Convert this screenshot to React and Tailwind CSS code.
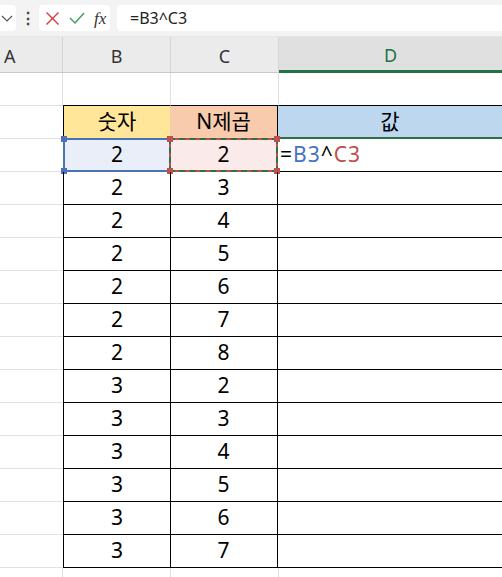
import React from 'react';

const rows = [
  [2, 2], [2, 3], [2, 4], [2, 5], [2, 6], [2, 7], [2, 8],
  [3, 2], [3, 3], [3, 4], [3, 5], [3, 6], [3, 7],
];

const font = { fontFamily: '"Noto Sans", "Noto Sans CJK KR", sans-serif' };

const Handle = ({ className }) => (
  <div className={`absolute w-[6px] h-[6px] ${className}`} />
);

const App = () => {
  return (
    <div className="w-[502px] h-[577px] overflow-hidden bg-white" style={font}>
      {/* Formula bar */}
      <div className="h-[37px] bg-[#f3f3f3] flex items-start pt-[5px] border-b border-[#e6e6e6]">
        <div className="w-[16px] h-[26px] bg-white rounded-r-[4px] flex items-center justify-center shrink-0">
          <svg width="12" height="10" viewBox="0 0 12 10" className="ml-[-3px]">
            <path d="M1 3 L6 8 L11 3" fill="none" stroke="#555" strokeWidth="1.2" />
          </svg>
        </div>
        <div className="w-[23px] h-[26px] flex items-center justify-center text-[#444] text-[16px] font-bold shrink-0">⋮</div>
        <div className="w-[71px] h-[26px] bg-white rounded-[4px] flex items-center pl-[6px] gap-[9px] shrink-0">
          <svg width="15" height="15" viewBox="0 0 15 15">
            <path d="M1.5 1.5 L13.5 13.5 M13.5 1.5 L1.5 13.5" stroke="#d9363e" strokeWidth="1.4" />
          </svg>
          <svg width="16" height="14" viewBox="0 0 16 14">
            <path d="M1 7 L6 12 L15 2" fill="none" stroke="#3d9b5b" strokeWidth="1.4" />
          </svg>
          <span className="text-[17px] italic text-[#333] leading-none" style={{ fontFamily: '"Liberation Serif", serif' }}>fx</span>
        </div>
        <div className="ml-[7px] flex-1 h-[26px] bg-white rounded-l-[4px] flex items-center pl-[13px] text-[16px] text-[#222]">
          =B3^C3
        </div>
      </div>

      {/* Column headers */}
      <div className="h-[36px] flex bg-[#ebebeb] border-b border-[#c8c8c8] text-[18px] text-[#333]">
        <div className="w-[63px] border-r border-[#d6d6d6] flex items-center pl-[4px] pt-[3px]">A</div>
        <div className="w-[108px] border-r border-[#d6d6d6] flex items-center justify-center pt-[3px]">B</div>
        <div className="w-[108px] border-r border-[#d6d6d6] flex items-center justify-center pt-[3px]">C</div>
        <div className="flex-1 bg-[#e0e0e0] border-b-[3px] border-[#217346] flex items-center justify-center text-[#217346] mb-[-1px] pt-[3px]">D</div>
      </div>

      {/* Row 1 (empty) */}
      <div className="h-[33px] flex">
        <div className="w-[63px] border-r border-b border-[#e1e1e1]" />
        <div className="w-[108px] border-r border-[#e1e1e1] border-b border-b-black" />
        <div className="w-[108px] border-r border-[#e1e1e1] border-b border-b-black" />
        <div className="flex-1 border-b border-black" />
      </div>

      {/* Table header */}
      <div className="h-[33px] flex text-[21px] text-black">
        <div className="w-[63px] border-b border-[#e1e1e1]" />
        <div className="w-[108px] bg-[#ffe699] border-l border-r border-b border-black flex items-center justify-center">숫자</div>
        <div className="w-[108px] bg-[#f8cbad] border-r border-b border-black flex items-center justify-center ml-[-1px]">N제곱</div>
        <div className="flex-1 bg-[#bdd7ee] border-b-2 border-[#2f6f46] flex items-center justify-center">값</div>
      </div>

      {/* Data rows */}
      {rows.map(([b, c], i) => {
        const active = i === 0;
        return (
          <div key={i} className="h-[33px] flex text-[21px] text-black">
            <div className="w-[63px] border-b border-[#e1e1e1]" />
            <div className={`relative w-[108px] border-l border-r border-b border-black flex items-center justify-center ${active ? 'bg-[#e9eef9]' : ''}`}>
              {b}
              {active && (
                <>
                  <div className="absolute inset-[-1px] border-2 border-[#4a72b8]" />
                  <Handle className="bg-[#4a72b8] left-[-3px] top-[-3px]" />
                  <Handle className="bg-[#4a72b8] left-[-3px] bottom-[-3px]" />
                </>
              )}
            </div>
            <div className={`relative w-[108px] border-r border-b border-black flex items-center justify-center ml-[-1px] ${active ? 'bg-[#fbeaea]' : ''}`}>
              {c}
              {active && (
                <>
                  <div className="absolute inset-[-1px] border-2 border-[#c0504d]" />
                  <div className="absolute inset-[-1px] border-2 border-dashed border-[#2f6f46]" />
                  <Handle className="bg-[#c0504d] left-[-3px] top-[-3px]" />
                  <Handle className="bg-[#c0504d] left-[-3px] bottom-[-3px]" />
                  <Handle className="bg-[#c0504d] right-[-3px] top-[-3px]" />
                  <Handle className="bg-[#c0504d] right-[-3px] bottom-[-3px]" />
                </>
              )}
            </div>
            <div className="flex-1 border-b border-black flex items-center pl-[2px]">
              {active && (
                <span className="tracking-[1px]">
                  =<span className="text-[#4472c4]">B3</span>^<span className="text-[#c0504d]">C3</span>
                </span>
              )}
            </div>
          </div>
        );
      })}

      {/* Row after table */}
      <div className="h-[33px] flex">
        <div className="w-[63px] border-r border-[#e1e1e1]" />
        <div className="w-[108px] border-r border-[#e1e1e1]" />
        <div className="w-[108px] border-r border-[#e1e1e1]" />
        <div className="flex-1" />
      </div>
    </div>
  );
};

export default App;
